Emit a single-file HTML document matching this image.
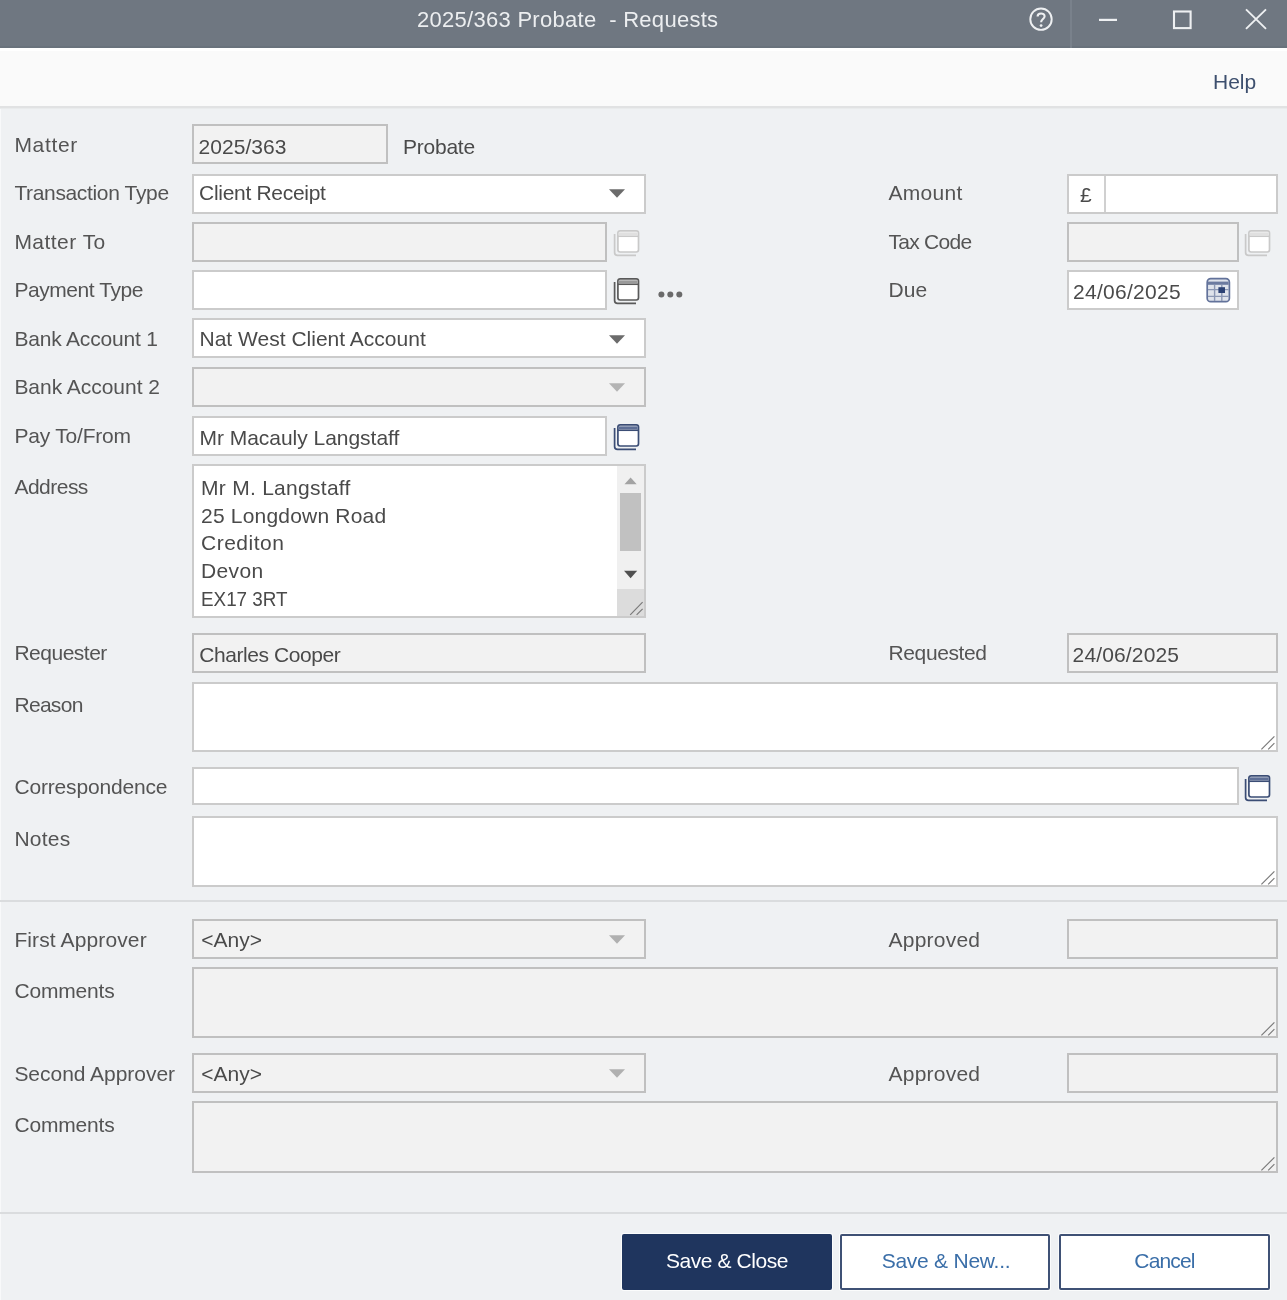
<!DOCTYPE html>
<html lang="en">
<head>
<meta charset="utf-8">
<title>2025/363 Probate - Requests</title>
<style>
*{box-sizing:border-box;margin:0;padding:0}
html,body{width:1287px;height:1300px;overflow:hidden}
body{position:relative;background:#eff1f3;font-family:"Liberation Sans",sans-serif;font-size:21px;color:#505050}
.abs,.lbl,.box,.txt,svg{position:absolute}
svg{overflow:visible}
body>*{filter:blur(.7px)}
#titlebar{left:-6px;top:-6px;width:1299px;height:54px;background:#6f7781;border-bottom:2px solid #69727c}
#tdiv{left:1070px;top:0;width:2px;height:48px;background:#79818b}
#title{left:417px;top:0;height:40px;line-height:40px;font-size:22px;color:#eceef0;white-space:pre}
#strip{left:-6px;top:48px;width:1299px;height:3px;background:#fff}
#toolbar{left:-6px;top:51px;width:1299px;height:55px;background:#fafafa}
#tbline{left:-6px;top:106px;width:1299px;height:3px;background:#e1e2e3;border-bottom:1px solid #e9ebec}
#help{left:1213px;top:62px;height:40px;line-height:40px;color:#3d4f6e}
.lbl{left:14.4px;height:40px;line-height:40px;white-space:pre;color:#545454}
.lbl.r{left:888.6px}
.box{height:40px;border:2px solid #cbcbcb;background:#fff;line-height:36px;padding-left:5px;color:#4a4a4a;white-space:pre;overflow:hidden}
.box.dis{background:#f2f2f2;border-color:#c0c0c0}
.sep{position:absolute;left:-6px;width:1299px;height:2px;background:#dadcde}
.btn{position:absolute;top:1234px;height:56px;width:210px;border-radius:2px;line-height:50px;text-align:center;border:2px solid #3f5175;background:#fff;color:#3a6ea8;white-space:pre;box-shadow:0 0 0 1px rgba(255,255,255,.75)}
.btn.pri{background:#1f355e;border-color:#1f355e;color:#fff}
#addr div{height:27.65px;line-height:27.65px}
</style>
</head>
<body>
<div id="titlebar" class="abs"></div>
<div id="tdiv" class="abs"></div>
<div id="title" class="abs" style="letter-spacing:0.28px">2025/363 Probate  - Requests</div>
<svg style="left:1020px;top:0" width="267" height="48" viewBox="1020 0 267 48" fill="none" stroke="#eef0f2">
<circle cx="1041" cy="19.2" r="10.7" stroke-width="1.9"/>
<path d="M1037.6 16.4 C1037.6 12.6 1044.6 12.6 1044.6 16.3 C1044.6 19 1041.1 19.2 1041.1 22.3" stroke-width="2.1"/>
<circle cx="1041.1" cy="25.6" r="1.4" fill="#eef0f2" stroke="none"/>
<path d="M1099 19.9 H1117" stroke-width="2.2"/>
<rect x="1174" y="11.5" width="16.6" height="16.6" stroke-width="2.1"/>
<path d="M1246 9.4 L1266 28.9 M1266 9.4 L1246 28.9" stroke-width="1.9"/>
</svg>
<div class="abs" style="left:-1px;top:50px;width:2px;height:1260px;background:#f8f9fa"></div>
<div id="strip" class="abs"></div>
<div id="toolbar" class="abs"></div>
<div id="tbline" class="abs"></div>
<div id="help" class="abs" style="letter-spacing:0.0px">Help</div>
<div class="lbl" style="top:125px;letter-spacing:0.68px">Matter</div>
<div class="lbl" style="top:173px;letter-spacing:-0.35px">Transaction Type</div>
<div class="lbl" style="top:222px;letter-spacing:0.47px">Matter To</div>
<div class="lbl" style="top:270px;letter-spacing:-0.44px">Payment Type</div>
<div class="lbl" style="top:319px;letter-spacing:-0.18px">Bank Account 1</div>
<div class="lbl" style="top:367px;letter-spacing:-0.03px">Bank Account 2</div>
<div class="lbl" style="top:416px;letter-spacing:-0.2px">Pay To/From</div>
<div class="lbl" style="top:467px;letter-spacing:-0.51px">Address</div>
<div class="lbl" style="top:633px;letter-spacing:-0.49px">Requester</div>
<div class="lbl" style="top:685px;letter-spacing:-0.68px">Reason</div>
<div class="lbl" style="top:767px;letter-spacing:-0.17px">Correspondence</div>
<div class="lbl" style="top:819px;letter-spacing:0.23px">Notes</div>
<div class="lbl" style="top:920px;letter-spacing:0.12px">First Approver</div>
<div class="lbl" style="top:971px;letter-spacing:-0.18px">Comments</div>
<div class="lbl" style="top:1054px;letter-spacing:-0.03px">Second Approver</div>
<div class="lbl" style="top:1105px;letter-spacing:-0.18px">Comments</div>
<div class="lbl r" style="top:173px;letter-spacing:0.25px">Amount</div>
<div class="lbl r" style="top:222px;letter-spacing:-0.75px">Tax Code</div>
<div class="lbl r" style="top:270px;letter-spacing:0.09px">Due</div>
<div class="lbl r" style="top:633px;letter-spacing:-0.41px">Requested</div>
<div class="lbl r" style="top:920px;letter-spacing:0.21px">Approved</div>
<div class="lbl r" style="top:1054px;letter-spacing:0.21px">Approved</div>
<div class="box dis" style="left:192px;top:124px;width:196px;letter-spacing:0.08px;line-height:42px;padding-left:4.4px;">2025/363</div>
<div class="txt" style="left:403px;top:127px;height:40px;line-height:40px;color:#4a4a4a;letter-spacing:-0.24px">Probate</div>
<div class="box" style="left:192px;top:174px;width:454px;letter-spacing:-0.29px;line-height:34px;padding-left:5px;">Client Receipt</div>
<div class="box dis" style="left:192px;top:222px;width:415px;"></div>
<div class="box" style="left:192px;top:270px;width:415px;"></div>
<div class="box" style="left:192px;top:318px;width:454px;letter-spacing:0.01px;line-height:38px;padding-left:5.5px;">Nat West Client Account</div>
<div class="box dis" style="left:192px;top:367px;width:454px;"></div>
<div class="box" style="left:192px;top:416px;width:415px;letter-spacing:-0.03px;line-height:40px;padding-left:5.5px;">Mr Macauly Langstaff</div>
<div class="box" id="addr" style="left:192px;top:464px;width:454px;height:154px;padding:8px 0 0 7px"><div style="letter-spacing:0.28px">Mr M. Langstaff</div><div style="letter-spacing:0.2px">25 Longdown Road</div><div style="letter-spacing:0.49px">Crediton</div><div style="letter-spacing:0.36px">Devon</div><div><span style="display:inline-block;transform:scaleX(0.897);transform-origin:0 50%">EX17 3RT</span></div></div>
<div class="abs" style="left:617px;top:466px;width:27px;height:123px;background:#f0f0f0"></div>
<div class="abs" style="left:617px;top:589px;width:27px;height:27px;background:#dcdcdc"></div>
<div class="abs" style="left:620px;top:493px;width:21px;height:58px;background:#c1c1c1"></div>
<svg style="left:617px;top:467px" width="27" height="150" viewBox="617 467 27 150">
<path d="M624.5 484.3 L630.6 477.6 L636.7 484.3 Z" fill="#a3a3a3"/>
<path d="M624 570.8 L637.2 570.8 L630.6 578.3 Z" fill="#505050"/>
<path d="M630.2 614.8 L642.6 602.2 M636.6 614.8 L642.6 608.8" stroke="#7b7b7b" stroke-width="1.2" fill="none"/>
</svg>
<div class="box dis" style="left:192px;top:633px;width:454px;letter-spacing:-0.44px;line-height:40px;padding-left:5.3px;">Charles Cooper</div>
<div class="box" style="left:192px;top:682px;width:1086px;height:70px;"></div>
<div class="box" style="left:192px;top:767px;width:1047px;height:38px;"></div>
<div class="box" style="left:192px;top:816px;width:1086px;height:71px;"></div>
<div class="sep" style="top:900px"></div>
<div class="box dis" style="left:192px;top:919px;width:454px;letter-spacing:0.0px;line-height:38px;padding-left:7.2px;">&lt;Any&gt;</div>
<div class="box dis" style="left:192px;top:967px;width:1086px;height:71px;"></div>
<div class="box dis" style="left:192px;top:1053px;width:454px;letter-spacing:0.0px;line-height:38px;padding-left:7.2px;">&lt;Any&gt;</div>
<div class="box dis" style="left:192px;top:1101px;width:1086px;height:72px;"></div>
<div class="sep" style="top:1212px"></div>
<div class="box" style="left:1067px;top:174px;width:211px;"></div>
<div class="abs" style="left:1104px;top:176px;width:2px;height:36px;background:#d0d0d0"></div>
<div class="txt" style="left:1080px;top:175px;height:40px;line-height:40px;font-size:21px;color:#4a4a4a">£</div>
<div class="box dis" style="left:1067px;top:222px;width:172px;"></div>
<div class="box" style="left:1067px;top:270px;width:172px;letter-spacing:0.28px;line-height:40px;padding-left:4px;">24/06/2025</div>
<div class="box dis" style="left:1067px;top:633px;width:211px;letter-spacing:0.14px;line-height:40px;padding-left:3.6px;">24/06/2025</div>
<div class="box dis" style="left:1067px;top:919px;width:211px;"></div>
<div class="box dis" style="left:1067px;top:1053px;width:211px;"></div>
<svg style="left:608px;top:188px" width="18" height="11" viewBox="0 0 18 11"><path d="M1 1.2 H17 L9 9.8 Z" fill="#6b6b6b"/></svg>
<svg style="left:608px;top:334px" width="18" height="11" viewBox="0 0 18 11"><path d="M1 1.2 H17 L9 9.8 Z" fill="#6b6b6b"/></svg>
<svg style="left:608px;top:382px" width="18" height="11" viewBox="0 0 18 11"><path d="M1 1.2 H17 L9 9.8 Z" fill="#b4b4b4"/></svg>
<svg style="left:608px;top:934px" width="18" height="11" viewBox="0 0 18 11"><path d="M1 1.2 H17 L9 9.8 Z" fill="#b0b0b0"/></svg>
<svg style="left:608px;top:1068px" width="18" height="11" viewBox="0 0 18 11"><path d="M1 1.2 H17 L9 9.8 Z" fill="#b0b0b0"/></svg>
<svg style="left:612px;top:228px" width="30" height="31" viewBox="0 0 30 31" fill="none" stroke="#c9c9c9" stroke-width="1.7">
<path d="M2.6 6 V24.5 Q2.6 27.4 5.5 27.4 H24"/>
<rect x="5.9" y="2.8" width="20.6" height="21.2" rx="2.2" fill="#fff"/>
<path d="M6.7 5.9 H25.7" stroke="#e0e0e0" stroke-width="3.2"/>
<path d="M5.9 8.3 H26.5" stroke-width="1.5"/>
</svg>
<svg style="left:612px;top:276px" width="30" height="31" viewBox="0 0 30 31" fill="none" stroke="#5a5a5a" stroke-width="1.7">
<path d="M2.6 6 V24.5 Q2.6 27.4 5.5 27.4 H24"/>
<rect x="5.9" y="2.8" width="20.6" height="21.2" rx="2.2" fill="#fff"/>
<path d="M6.7 5.9 H25.7" stroke="#9a9a9a" stroke-width="3.2"/>
<path d="M5.9 8.3 H26.5" stroke-width="1.5"/>
</svg>
<svg style="left:612px;top:422px" width="30" height="31" viewBox="0 0 30 31" fill="none" stroke="#3b4d75" stroke-width="1.7">
<path d="M2.6 6 V24.5 Q2.6 27.4 5.5 27.4 H24"/>
<rect x="5.9" y="2.8" width="20.6" height="21.2" rx="2.2" fill="#fff"/>
<path d="M6.7 5.9 H25.7" stroke="#5e6f96" stroke-width="3.2"/>
<path d="M5.9 8.3 H26.5" stroke-width="1.5"/>
</svg>
<svg style="left:1243px;top:228px" width="30" height="31" viewBox="0 0 30 31" fill="none" stroke="#c9c9c9" stroke-width="1.7">
<path d="M2.6 6 V24.5 Q2.6 27.4 5.5 27.4 H24"/>
<rect x="5.9" y="2.8" width="20.6" height="21.2" rx="2.2" fill="#fff"/>
<path d="M6.7 5.9 H25.7" stroke="#e0e0e0" stroke-width="3.2"/>
<path d="M5.9 8.3 H26.5" stroke-width="1.5"/>
</svg>
<svg style="left:1243px;top:773px" width="30" height="31" viewBox="0 0 30 31" fill="none" stroke="#3b4d75" stroke-width="1.7">
<path d="M2.6 6 V24.5 Q2.6 27.4 5.5 27.4 H24"/>
<rect x="5.9" y="2.8" width="20.6" height="21.2" rx="2.2" fill="#fff"/>
<path d="M6.7 5.9 H25.7" stroke="#5e6f96" stroke-width="3.2"/>
<path d="M5.9 8.3 H26.5" stroke-width="1.5"/>
</svg>
<svg style="left:656px;top:289px" width="30" height="12" viewBox="656 289 30 12"><circle cx="661.4" cy="294.6" r="3" fill="#6a6a6a"/><circle cx="670.3" cy="294.6" r="3" fill="#6a6a6a"/><circle cx="679.3" cy="294.6" r="3" fill="#6a6a6a"/></svg>
<svg style="left:1205px;top:276px" width="27" height="28" viewBox="1205 276 27 28" fill="none">
<rect x="1207.2" y="278.7" width="22.2" height="23" rx="3.5" fill="#dfe3eb" stroke="#62729a" stroke-width="1.7"/>
<path d="M1208 283.2 H1228.6" stroke="#6c7ba0" stroke-width="3.2"/>
<path d="M1208 289.6 H1228.6 M1208 296.4 H1228.6 M1214.6 285 V301 M1221.8 285 V301" stroke="#8c98b4" stroke-width="1.4"/>
<rect x="1218.4" y="287.2" width="6.6" height="5.8" fill="#2c4274"/>
</svg>
<svg style="left:1258px;top:732px" width="20" height="20" viewBox="1258 732 20 20"><path d="M1261.4 749.4 L1274.4 736.4 M1268.2 749.4 L1274.4 743.1999999999999" stroke="#7b7b7b" stroke-width="1.2" fill="none"/></svg>
<svg style="left:1258px;top:867px" width="20" height="20" viewBox="1258 867 20 20"><path d="M1261.4 884.4 L1274.4 871.4 M1268.2 884.4 L1274.4 878.1999999999999" stroke="#7b7b7b" stroke-width="1.2" fill="none"/></svg>
<svg style="left:1258px;top:1018px" width="20" height="20" viewBox="1258 1018 20 20"><path d="M1261.4 1035.4 L1274.4 1022.4000000000001 M1268.2 1035.4 L1274.4 1029.2" stroke="#7b7b7b" stroke-width="1.2" fill="none"/></svg>
<svg style="left:1258px;top:1153px" width="20" height="20" viewBox="1258 1153 20 20"><path d="M1261.4 1170.4 L1274.4 1157.4 M1268.2 1170.4 L1274.4 1164.2" stroke="#7b7b7b" stroke-width="1.2" fill="none"/></svg>
<div class="btn pri" style="left:622px;letter-spacing:-0.43px">Save &amp; Close</div>
<div class="btn" style="left:840px;padding-left:2px;letter-spacing:-0.25px">Save &amp; New...</div>
<div class="btn" style="left:1059px;width:211px;letter-spacing:-0.83px">Cancel</div>
</body>
</html>
